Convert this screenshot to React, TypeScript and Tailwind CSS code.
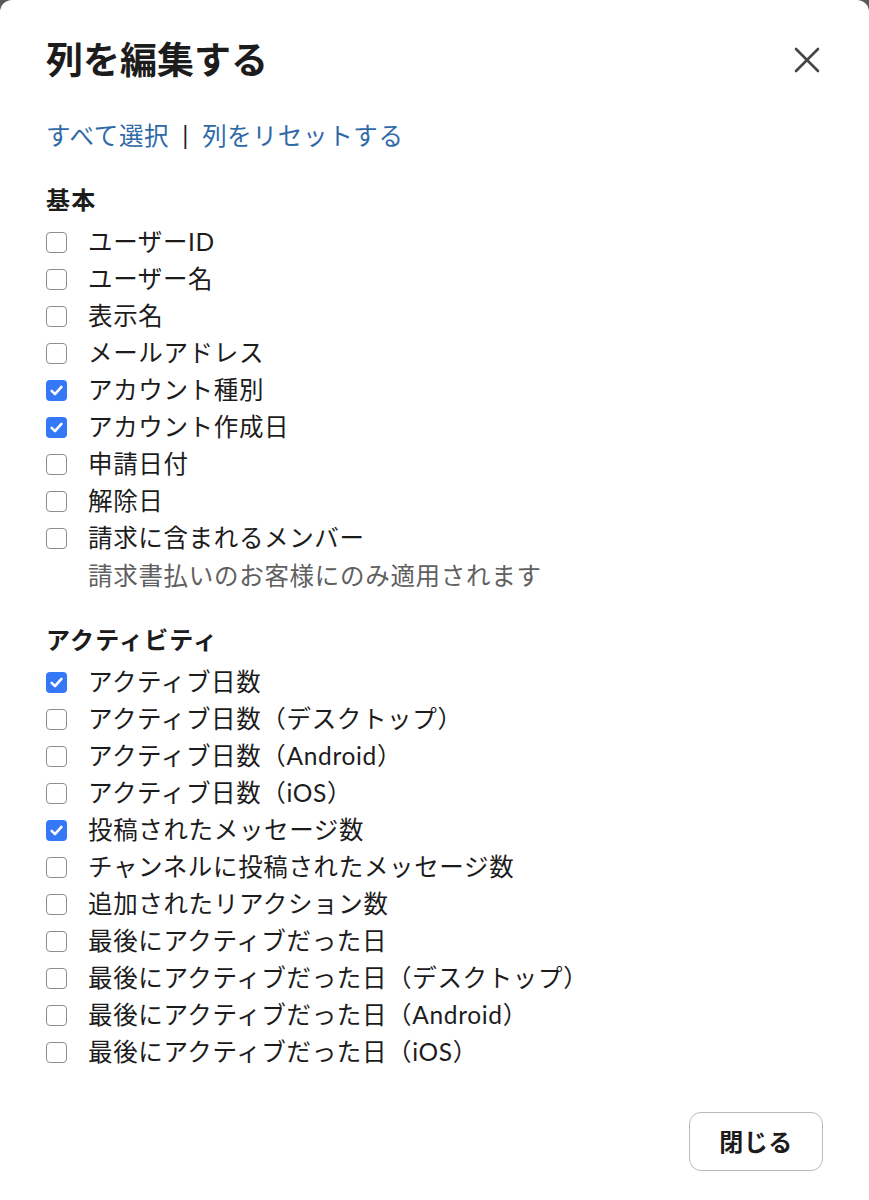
import React, { useState } from "react";

interface Column {
  id: string;
  label: string;
  note?: string;
  checked: boolean;
}

const basic: Column[] = [
  { id: "user_id", label: "ユーザーID", checked: false },
  { id: "user_name", label: "ユーザー名", checked: false },
  { id: "display_name", label: "表示名", checked: false },
  { id: "email", label: "メールアドレス", checked: false },
  { id: "account_type", label: "アカウント種別", checked: true },
  { id: "created", label: "アカウント作成日", checked: true },
  { id: "applied", label: "申請日付", checked: false },
  { id: "removed", label: "解除日", checked: false },
  { id: "billing", label: "請求に含まれるメンバー", note: "請求書払いのお客様にのみ適用されます", checked: false },
];

const activity: Column[] = [
  { id: "days", label: "アクティブ日数", checked: true },
  { id: "days_desktop", label: "アクティブ日数（デスクトップ）", checked: false },
  { id: "days_android", label: "アクティブ日数（Android）", checked: false },
  { id: "days_ios", label: "アクティブ日数（iOS）", checked: false },
  { id: "messages", label: "投稿されたメッセージ数", checked: true },
  { id: "channel_messages", label: "チャンネルに投稿されたメッセージ数", checked: false },
  { id: "reactions", label: "追加されたリアクション数", checked: false },
  { id: "last", label: "最後にアクティブだった日", checked: false },
  { id: "last_desktop", label: "最後にアクティブだった日（デスクトップ）", checked: false },
  { id: "last_android", label: "最後にアクティブだった日（Android）", checked: false },
  { id: "last_ios", label: "最後にアクティブだった日（iOS）", checked: false },
];

const CheckRow = ({ col, onToggle }: { col: Column; onToggle: () => void }) => (
  <div>
    <label className="flex items-center h-[37px] cursor-pointer">
      <span
        className={
          col.checked
            ? "w-[21px] h-[21px] shrink-0 rounded-[4px] bg-[#3478f6] flex items-center justify-center"
            : "w-[21px] h-[21px] shrink-0 rounded-[4px] border-[1.5px] border-[#8e8e8e] bg-white"
        }
        onClick={onToggle}
      >
        {col.checked && (
          <svg width="15" height="15" viewBox="0 0 14 14" fill="none">
            <path d="M2.5 7.4 5.6 10.4 11.6 3.6" stroke="white" strokeWidth="2.4" strokeLinecap="round" strokeLinejoin="round" />
          </svg>
        )}
      </span>
      <span className="ml-[21px] text-[24.5px] tracking-[0.65px] text-[#1d1c1d] whitespace-nowrap">{col.label}</span>
    </label>
    {col.note && (
      <p className="pl-[42px] h-[37px] leading-[37px] text-[24.5px] tracking-[0.7px] text-[#616061] whitespace-nowrap">
        {col.note}
      </p>
    )}
  </div>
);

const App = () => {
  const [basicCols, setBasicCols] = useState(basic);
  const [activityCols, setActivityCols] = useState(activity);

  const toggle = (list: Column[], set: (c: Column[]) => void, id: string) =>
    set(list.map(c => (c.id === id ? { ...c, checked: !c.checked } : c)));

  return (
    <div className="bg-[#5a5a5a] min-h-[1200px]" style={{ fontFamily: 'Lato, "Noto Sans CJK JP", sans-serif' }}>
      <div className="bg-white rounded-t-[12px] min-h-[1200px] px-[46px] pt-[36px]">
        <div className="flex items-center justify-between">
          <h1 className="text-[37px] font-bold text-[#1d1c1d] leading-[48px]">列を編集する</h1>
          <button className="mr-[-2px] p-1">
            <svg width="28" height="28" viewBox="0 0 28 28" fill="none">
              <path d="M3 3 25 25M25 3 3 25" stroke="#454545" strokeWidth="2.6" strokeLinecap="round" />
            </svg>
          </button>
        </div>

        <div className="mt-[34px] flex items-center h-[36px] text-[24.5px] tracking-[0.7px] text-[#2f6aa8]">
          <button onClick={() => setBasicCols(basicCols.map(c => ({ ...c, checked: true })))}>すべて選択</button>
          <span className="mx-[13px] text-[#1d1c1d]">|</span>
          <button onClick={() => { setBasicCols(basic); setActivityCols(activity); }}>列をリセットする</button>
        </div>

        <h2 className="mt-[30px] text-[24px] font-bold tracking-[1.2px] text-[#1d1c1d] leading-[32px]">基本</h2>
        <div className="mt-[7.5px]">
          {basicCols.map(c => (
            <CheckRow key={c.id} col={c} onToggle={() => toggle(basicCols, setBasicCols, c.id)} />
          ))}
        </div>

        <h2 className="mt-[30.5px] text-[24px] font-bold tracking-[1.2px] text-[#1d1c1d] leading-[32px]">アクティビティ</h2>
        <div className="mt-[7.5px]">
          {activityCols.map(c => (
            <CheckRow key={c.id} col={c} onToggle={() => toggle(activityCols, setActivityCols, c.id)} />
          ))}
        </div>

        <div className="flex justify-end mt-[41.5px]">
          <button className="w-[134px] h-[59px] rounded-[12px] border-[1.5px] border-[#b9b9b9] text-[24px] font-bold tracking-[0.5px] text-[#1d1c1d]">
            閉じる
          </button>
        </div>
      </div>
    </div>
  );
};

export default App;
